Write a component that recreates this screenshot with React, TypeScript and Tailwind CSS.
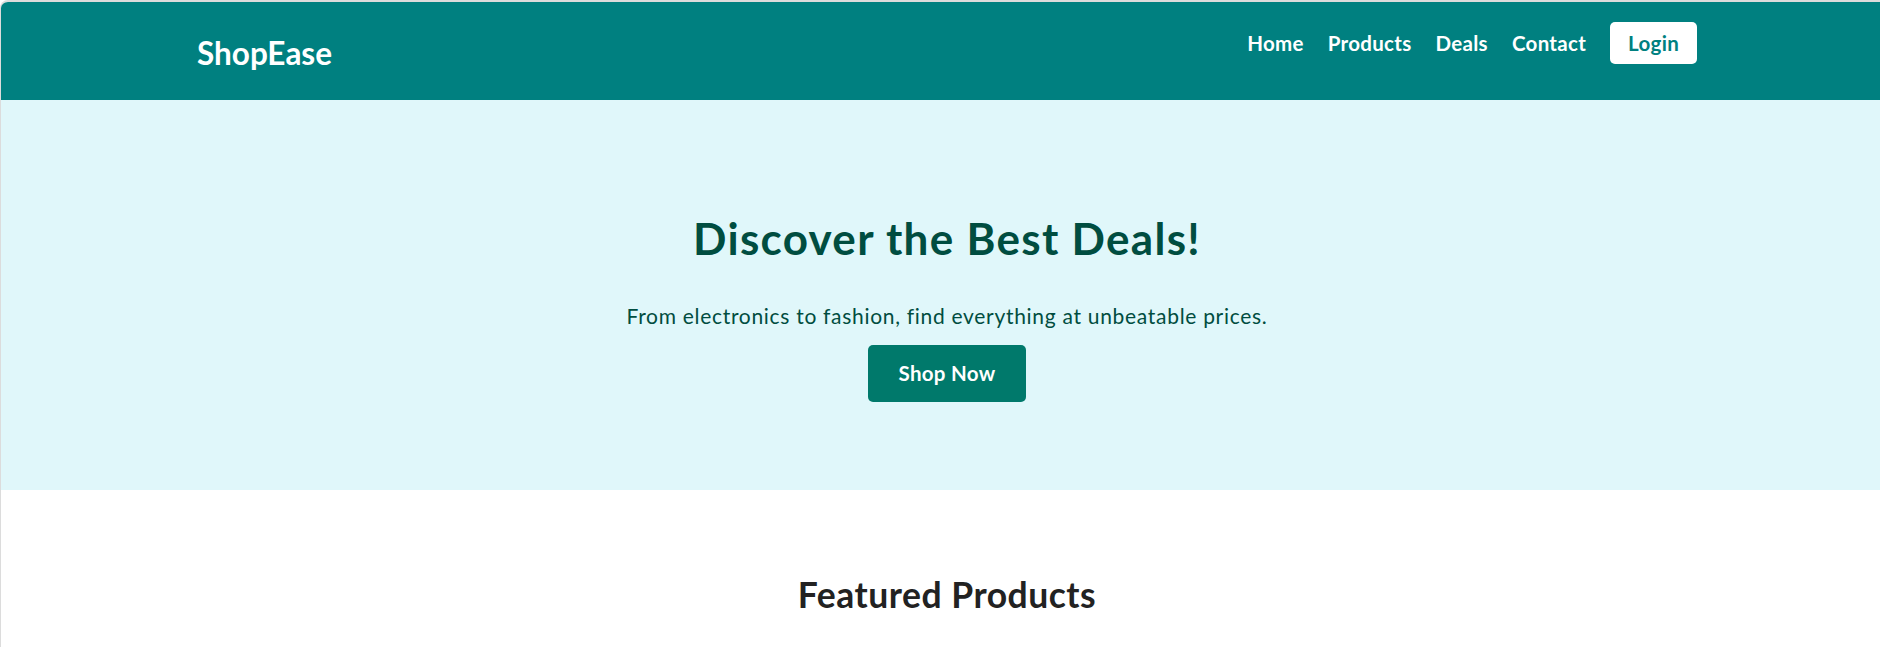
export default function App() {
  const links = ["Home", "Products", "Deals", "Contact"]

  return (
    <div className="min-h-screen bg-white border-l border-t-2 border-[#dcdcdc] rounded-tl-lg overflow-hidden font-['Lato',sans-serif]">
      {/* Header */}
      <header className="h-[98px] bg-[#008080] flex items-start justify-between pl-[196px] pr-[183px]">
        <div className="mt-[36px] text-[31.5px] leading-none font-bold text-white">ShopEase</div>
        <nav className="mt-[20px] flex items-center gap-[24px]">
          {links.map((l) => (
            <a key={l} href="#" className="text-[20.5px] tracking-[0.3px] leading-none font-bold text-white">
              {l}
            </a>
          ))}
          <button className="h-[42px] px-[18px] bg-white text-[#008080] rounded-[5px] text-[20.5px] tracking-[0.3px] leading-none font-bold">
            Login
          </button>
        </nav>
      </header>

      {/* Hero */}
      <section className="bg-[#e0f7fa] h-[390px] pt-[116px] pl-[13px] flex flex-col items-center">
        <h1 className="text-[44px] tracking-[1.3px] leading-none font-bold text-[#004d40]">Discover the Best Deals!</h1>
        <p className="mt-[45px] text-[21px] tracking-[0.7px] leading-none text-[#004d40]">
          From electronics to fashion, find everything at unbeatable prices.
        </p>
        <button className="mt-[19px] h-[57px] w-[158px] bg-[#00796b] text-white rounded-[5px] text-[20.5px] tracking-[0.3px] leading-none font-bold">
          Shop Now
        </button>
      </section>

      {/* Featured */}
      <section className="pt-[87px] pl-[13px] flex justify-center">
        <h2 className="text-[35.5px] tracking-[0.5px] leading-none font-bold text-[#222222]">Featured Products</h2>
      </section>
    </div>
  )
}
